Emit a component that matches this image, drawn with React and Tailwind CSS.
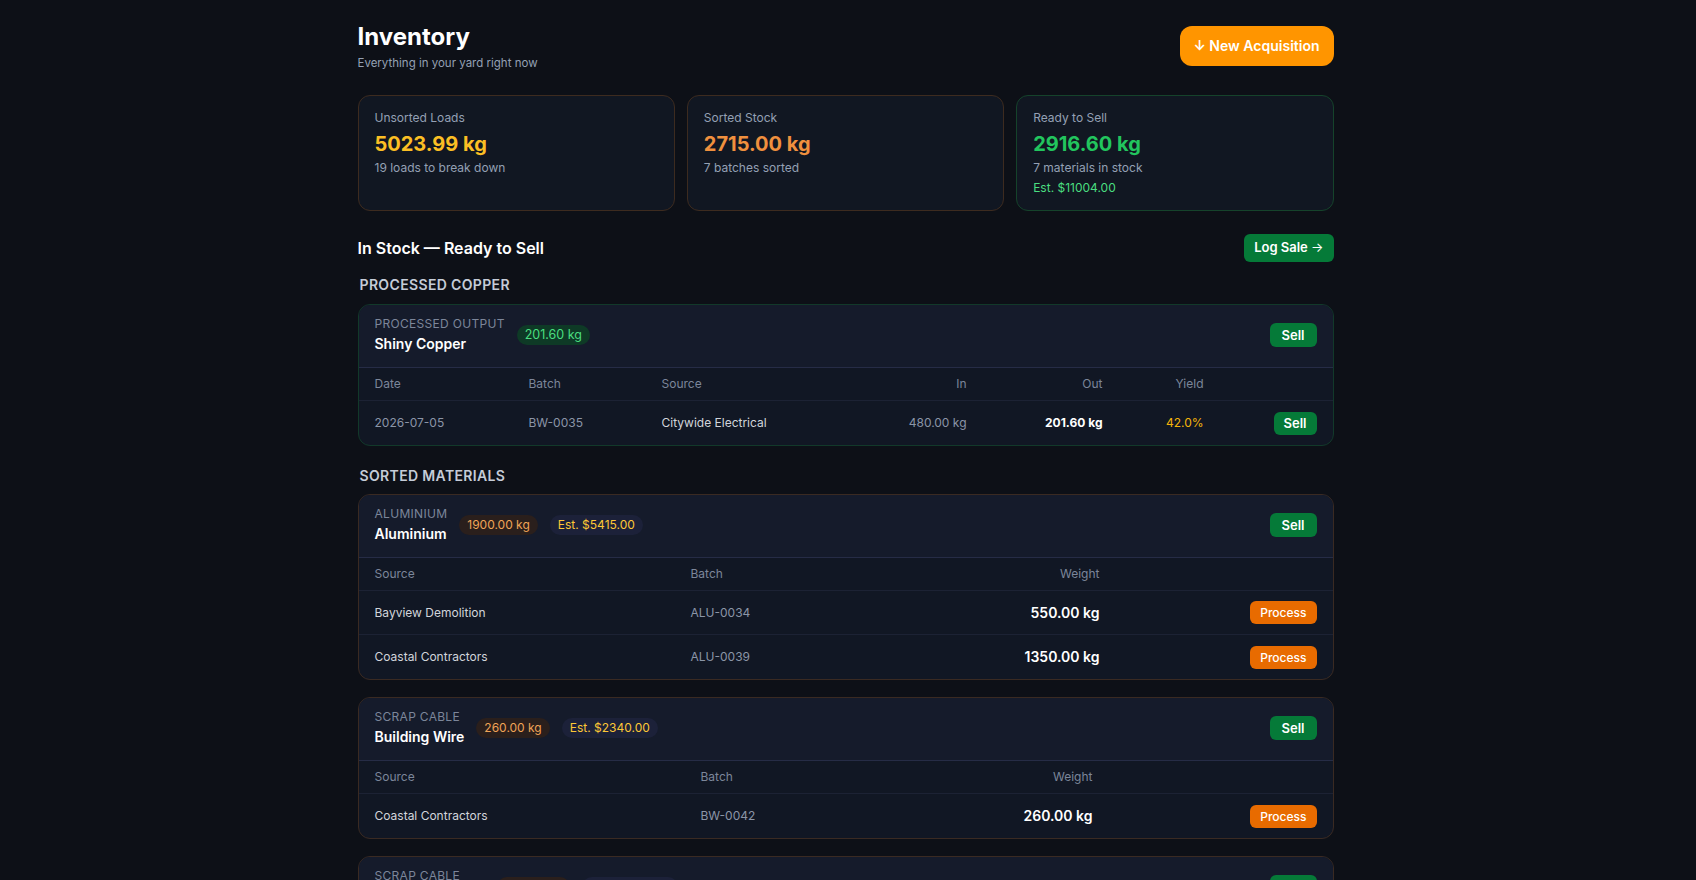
import React from 'react';

const sortedMaterials = [
  {
    kind: 'Aluminium',
    name: 'Aluminium',
    weight: '1900.00 kg',
    est: 'Est. $5415.00',
    cols: 'grid-cols-[316px_1fr_150px_217px]',
    rows: [
      { source: 'Bayview Demolition', batch: 'ALU-0034', weight: '550.00 kg' },
      { source: 'Coastal Contractors', batch: 'ALU-0039', weight: '1350.00 kg' },
    ],
  },
  {
    kind: 'Scrap Cable',
    name: 'Building Wire',
    weight: '260.00 kg',
    est: 'Est. $2340.00',
    cols: 'grid-cols-[326px_1fr_150px_224px]',
    rows: [{ source: 'Coastal Contractors', batch: 'BW-0042', weight: '260.00 kg' }],
  },
  {
    kind: 'Scrap Cable',
    name: 'Armoured Cable',
    weight: '320.00 kg',
    est: 'Est. $2880.00',
    cols: 'grid-cols-[326px_1fr_150px_224px]',
    rows: [
      { source: 'Bayview Demolition', batch: 'BW-0038', weight: '180.00 kg' },
      { source: 'Citywide Electrical', batch: 'BW-0041', weight: '140.00 kg' },
    ],
  },
];

function StatCard({ label, value, valueColor, sub, extra, border }) {
  return (
    <div className={`rounded-xl border ${border} bg-[#111722] px-4 py-3`}>
      <div className="text-xs leading-5 text-[#94a0b4]">{label}</div>
      <div className={`mt-0.5 text-xl font-bold leading-7 ${valueColor}`}>{value}</div>
      <div className="text-xs leading-5 text-[#94a0b4]">{sub}</div>
      {extra && <div className="text-xs leading-5 text-[#4ade80]">{extra}</div>}
    </div>
  );
}

function SellButton({ small }) {
  return (
    <button
      className={`rounded-md bg-[#057a38] text-[13px] font-semibold text-white ${
        small ? 'px-2.5 py-[3px] leading-[17px]' : 'px-3 py-[3px] leading-[18px]'
      }`}
    >
      Sell
    </button>
  );
}

function CardHeader({ kind, name, children }) {
  return (
    <div className="flex items-center justify-between border-b border-[#262c46] bg-[#151b2b] px-4 pb-[13px] pt-[11px]">
      <div className="flex items-center gap-3">
        <div>
          <div className="text-xs uppercase leading-4 tracking-wide text-[#7c869a]">{kind}</div>
          <div className="mt-0.5 text-sm font-semibold leading-5 text-white">{name}</div>
        </div>
        {children}
      </div>
      <SellButton />
    </div>
  );
}

function ProcessedCard() {
  const cols = 'grid grid-cols-[154px_133px_1fr_120px_136px_101px_113px] items-center px-4';
  return (
    <div className="overflow-hidden rounded-xl border border-[#12392a] bg-[#111724]">
      <CardHeader kind="Processed Output" name="Shiny Copper">
        <span className="rounded-full bg-[#0e3a26] px-2 text-[12.5px] leading-5 text-[#4ade80]">201.60 kg</span>
      </CardHeader>
      <div className={`${cols} h-[33px] border-b border-[#1c2234] text-xs text-[#7c869a]`}>
        <div>Date</div>
        <div>Batch</div>
        <div>Source</div>
        <div className="text-right">In</div>
        <div className="text-right">Out</div>
        <div className="text-right">Yield</div>
        <div />
      </div>
      <div className={`${cols} h-[44px] text-xs`}>
        <div className="text-[#8b95a7]">2026-07-05</div>
        <div className="text-[#8b95a7]">BW-0035</div>
        <div className="text-[#d1d5db]">Citywide Electrical</div>
        <div className="text-right text-[#8b95a7]">480.00 kg</div>
        <div className="text-right font-bold text-white">201.60 kg</div>
        <div className="text-right text-[#f5b50a]">42.0%</div>
        <div className="flex justify-end">
          <SellButton small />
        </div>
      </div>
    </div>
  );
}

function SortedCard({ item }) {
  const cols = `grid ${item.cols} items-center px-4`;
  return (
    <div className="overflow-hidden rounded-xl border border-[#3a2a22] bg-[#111724]">
      <CardHeader kind={item.kind} name={item.name}>
        <span className="rounded-full bg-[#2a1f1c] px-2 text-xs leading-5 text-[#f0a457]">{item.weight}</span>
        <span className="rounded-full bg-[#1c2139] px-2 text-xs leading-5 text-[#fcc736]">{item.est}</span>
      </CardHeader>
      <div className={`${cols} h-[33px] border-b border-[#1c2234] text-xs text-[#7c869a]`}>
        <div>Source</div>
        <div>Batch</div>
        <div className="text-right">Weight</div>
        <div />
      </div>
      <div className="divide-y divide-[#1c2234]">
        {item.rows.map((r) => (
          <div key={r.batch} className={`${cols} h-[44px] text-xs`}>
            <div className="text-[#d1d5db]">{r.source}</div>
            <div className="text-[#8b95a7]">{r.batch}</div>
            <div className="text-right text-sm font-semibold text-white">{r.weight}</div>
            <div className="flex justify-end">
              <button className="rounded-md bg-[#e86b00] px-2.5 py-[3px] text-xs font-medium leading-[17px] text-white">
                Process
              </button>
            </div>
          </div>
        ))}
      </div>
    </div>
  );
}

export default function App() {
  return (
    <div className="min-h-screen bg-[#0d1017] pr-[5px] font-['Inter',sans-serif] text-white">
      <div className="mx-auto max-w-5xl px-6 pb-16 pt-[21px]">
        {/* Page header */}
        <div className="flex items-center justify-between">
          <div>
            <h1 className="text-2xl font-bold leading-8">Inventory</h1>
            <p className="mt-0.5 text-[11.5px] leading-4 text-[#94a0b4]">Everything in your yard right now</p>
          </div>
          <button className="h-10 rounded-xl bg-[#ff9500] px-[14px] text-sm font-semibold text-white">
            ↓ New Acquisition
          </button>
        </div>

        {/* Summary */}
        <div className="mt-6 grid grid-cols-3 gap-3">
          <StatCard
            label="Unsorted Loads"
            value="5023.99 kg"
            valueColor="text-[#fbbf24]"
            sub="19 loads to break down"
            border="border-[#3d2b1f]"
          />
          <StatCard
            label="Sorted Stock"
            value="2715.00 kg"
            valueColor="text-[#f0903e]"
            sub="7 batches sorted"
            border="border-[#3d2b1f]"
          />
          <StatCard
            label="Ready to Sell"
            value="2916.60 kg"
            valueColor="text-[#22c55e]"
            sub="7 materials in stock"
            extra="Est. $11004.00"
            border="border-[#15432b]"
          />
        </div>

        <div className="mt-[23px] flex items-center justify-between">
          <h2 className="text-base font-semibold">In Stock — Ready to Sell</h2>
          <button className="h-7 rounded-md bg-[#057a38] px-2.5 text-[13px] font-semibold text-white">
            Log Sale <span className="font-normal">→</span>
          </button>
        </div>

        <section className="mt-[13px]">
          <h3 className="px-0.5 text-sm font-semibold uppercase leading-5 tracking-wide text-[#c5ccd8]">
            Processed Copper
          </h3>
          <div className="mt-[9px]">
            <ProcessedCard />
          </div>
        </section>

        <section className="mt-5">
          <h3 className="px-0.5 text-sm font-semibold uppercase leading-5 tracking-wide text-[#c5ccd8]">
            Sorted Materials
          </h3>
          <div className="mt-2 flex flex-col gap-[17px]">
            {sortedMaterials.map((m) => (
              <SortedCard key={m.name} item={m} />
            ))}
          </div>
        </section>
      </div>
    </div>
  );
}
